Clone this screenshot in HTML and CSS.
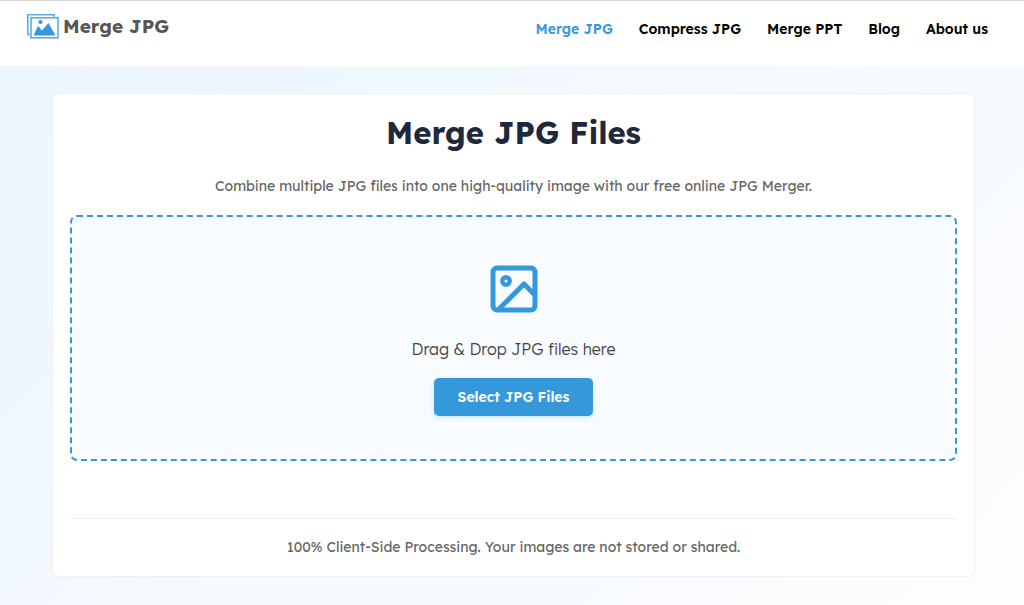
FILE: index.html
```html
<!DOCTYPE html>
<html lang="en">

<head>
    <meta charset="utf-8">
    <meta name="viewport" content="width=device-width, initial-scale=1">
    <title>Merge JPG</title>
    <link rel="stylesheet" href="styles.css">
</head>

<body>

    <header class="header">
        <a class="logo" href="#">
            <svg class="logo-icon" viewBox="0 0 32 25" aria-hidden="true">
                <path d="M3 20.5H.8V.8h26.4V3" fill="none" stroke="#5dade2" stroke-width="1.6"/>
                <rect x="4" y="3.8" width="27" height="20" fill="#fff" stroke="#5dade2" stroke-width="1.6"/>
                <circle cx="13.5" cy="8" r="2.1" fill="#3498db"/>
                <path d="M6.500 21.500l4.500-9.500 4 4.500 6.500-7.500 7 12.500z" fill="#3498db"/>
            </svg>
            <span>Merge JPG</span>
        </a>
        <nav class="nav">
            <a class="active" href="#">Merge JPG</a>
            <a href="#">Compress JPG</a>
            <a href="#">Merge PPT</a>
            <a href="#">Blog</a>
            <a href="#">About us</a>
        </nav>
    </header>

    <main class="main">
        <div class="card">
            <h1>Merge JPG Files</h1>
            <p class="intro">Combine multiple JPG files into one high-quality image with our free online JPG Merger.</p>

            <div class="drop-area">
                <svg class="drop-icon" viewBox="0 0 48 48" fill="none" stroke="#3498db" stroke-width="5" stroke-linejoin="round" aria-hidden="true">
                    <rect x="3" y="3" width="42" height="42" rx="4"/>
                    <circle cx="16" cy="16" r="3.700" stroke-width="4.400"/>
                    <path d="M9 44l25-25 12 12" stroke-width="5"/>
                </svg>
                <p class="drop-text">Drag &amp; Drop JPG files here</p>
                <button class="select-btn" type="button">Select JPG Files</button>
            </div>

            <p class="note">100% Client-Side Processing. Your images are not stored or shared.</p>
        </div>
    </main>

</body>

</html>
```

FILE: styles.css
```css
* {
    box-sizing: border-box;
    margin: 0;
    padding: 0;
}

body {
    min-height: 100vh;
    display: flex;
    flex-direction: column;
    font-family: Lexend, Inter, sans-serif;
    color: #555;
    background: #fff;
}

a {
    text-decoration: none;
}

.header {
    display: flex;
    justify-content: space-between;
    align-items: flex-start;
    height: 66px;
    padding: 12px 36px 0 27px;
    border-top: 1px solid #d9d9d9;
    background: #fff;
}

.logo {
    display: flex;
    align-items: center;
    gap: 4px;
    font-size: 19px;
    font-weight: 700;
    line-height: 26px;
    color: #555;
}

.logo-icon {
    width: 32px;
    height: 25px;
}

.nav {
    display: flex;
    gap: 26px;
    padding-top: 6px;
    font-size: 14px;
    font-weight: 600;
    line-height: 20px;
}

.nav a {
    color: #000;
}

.nav .active {
    color: #3498db;
}

.main {
    flex: 1;
    padding: 27px 49px 28px 52px;
    background: linear-gradient(135deg, #ebf5fd 0%, #f5fafd 50%, #fdfdff 100%);
}

.card {
    padding: 18px 17px 19px;
    border: 1px solid #eef1f3;
    border-radius: 7px;
    background: #fff;
    text-align: center;
}

h1 {
    font-size: 31px;
    font-weight: 700;
    line-height: 42px;
    color: #1e293b;
}

.intro {
    margin: 21px 0 18px;
    font-size: 14px;
    line-height: 22px;
    color: #666;
}

.drop-area {
    display: flex;
    flex-direction: column;
    align-items: center;
    padding: 48px 20px 43px;
    border: 2px dashed #3498db;
    border-radius: 7px;
    background: #f8fbff;
}

.drop-icon {
    width: 48px;
    height: 48px;
}

.drop-text {
    margin: 24px 0 17px;
    font-size: 16px;
    font-weight: 300;
    line-height: 24px;
    color: #444;
}

.select-btn {
    height: 38px;
    padding: 0 24px;
    border: 0;
    border-radius: 5px;
    background: #3498db;
    box-shadow: 0 2px 4px rgba(52, 152, 219, 0.2);
    font-family: inherit;
    font-size: 14px;
    font-weight: 600;
    color: #fff;
    cursor: pointer;
}

.note {
    margin-top: 57px;
    padding-top: 18px;
    border-top: 1px solid #eee;
    font-size: 14px;
    line-height: 20px;
    color: #666;
}
```
